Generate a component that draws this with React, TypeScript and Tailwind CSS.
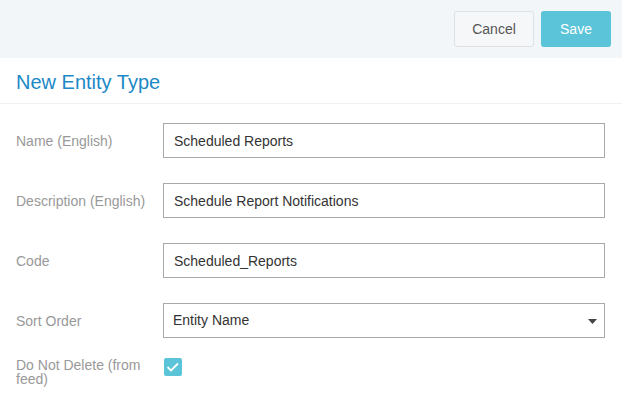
const fields = [
  { label: "Name (English)", value: "Scheduled Reports" },
  { label: "Description (English)", value: "Schedule Report Notifications" },
  { label: "Code", value: "Scheduled_Reports" },
];

export default function App() {
  return (
    <main className="min-h-screen w-full bg-white font-['Liberation_Sans',Arial,sans-serif]">
      <div className="flex h-[58px] items-center justify-end gap-[7px] bg-[#f3f6f9] pr-[11px]">
        <button className="h-[36px] w-[80px] rounded-[3px] border border-[#dde2e7] bg-[#f5f7f9] text-[14px] text-[#555]">
          Cancel
        </button>
        <button className="h-[36px] w-[70px] rounded-[3px] bg-[#5bc4d9] text-[14px] text-white">
          Save
        </button>
      </div>

      <div className="flex h-[46px] items-center border-b border-[#eef0f2] px-4 pt-[3px]">
        <h1 className="text-[20px] text-[#1c89c6]">New Entity Type</h1>
      </div>

      <form className="flex flex-col gap-[25px] pl-4 pr-[17px] pt-[19px]">
        {fields.map((f) => (
          <div key={f.label} className="flex items-center">
            <label className="w-[147px] shrink-0 pr-[15px] pt-px text-[14px] text-[#999]">{f.label}</label>
            <input
              readOnly
              value={f.value}
              className="h-[35px] flex-1 border border-[#aaa] px-[10px] text-[14px] text-[#333] outline-none"
            />
          </div>
        ))}

        <div className="flex items-center">
          <label className="w-[147px] shrink-0 pr-[15px] pt-px text-[14px] text-[#999]">Sort Order</label>
          <div className="relative flex h-[35px] flex-1 items-center border border-[#aaa] px-[9px] text-[14px] text-[#333]">
            <span>Entity Name</span>
            <svg className="absolute right-[7px] top-[15px]" width="9" height="5" viewBox="0 0 9 5">
              <path d="M0 0h9L4.5 5z" fill="#444" />
            </svg>
          </div>
        </div>

        <div className="-mt-[5px] flex items-start">
          <label className="w-[147px] shrink-0 pr-[15px] text-[14px] leading-[14px] text-[#999]">
            Do Not Delete (from feed)
          </label>
          <span className="ml-px flex h-[18px] w-[18px] items-center justify-center rounded-[2px] bg-[#5bc4d9]">
            <svg width="14" height="10" viewBox="0 0 14 10">
              <path d="M1.5 5l3.5 3.5 7-7" fill="none" stroke="white" strokeWidth="1.8" />
            </svg>
          </span>
        </div>
      </form>
    </main>
  );
}
